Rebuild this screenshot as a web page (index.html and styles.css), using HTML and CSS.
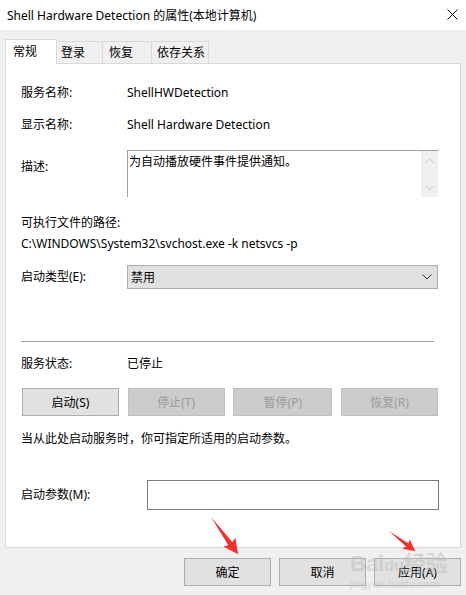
FILE: index.html
```html
<!DOCTYPE html>
<html lang="zh-CN">
<head>
    <meta charset="UTF-8">
    <title>Shell Hardware Detection 的属性(本地计算机)</title>
    <link rel="stylesheet" href="styles.css">
</head>
<body>
    <div class="window">
        <div class="titlebar">
            <span class="title">Shell Hardware Detection 的属性(本地计算机)</span>
            <svg class="close" width="11" height="11" viewBox="0 0 11 11">
                <path d="M0.5 0.5 L10.5 10.5 M10.5 0.5 L0.5 10.5" stroke="#000" stroke-width="1"/>
            </svg>
        </div>
        <div class="dialog">
            <div class="tabs">
                <div class="tab selected">常规</div>
                <div class="tab t2">登录</div>
                <div class="tab t3">恢复</div>
                <div class="tab t4">依存关系</div>
            </div>
            <div class="panel">
                <div class="row r-name">
                    <span class="label">服务名称:</span>
                    <span class="value">ShellHWDetection</span>
                </div>
                <div class="row r-display">
                    <span class="label">显示名称:</span>
                    <span class="value">Shell Hardware Detection</span>
                </div>
                <div class="row r-desc">
                    <span class="label desc-label">描述:</span>
                    <div class="desc-box">
                        <div class="desc-text">为自动播放硬件事件提供通知。</div>
                        <div class="scrollbar">
                            <svg width="9" height="6" viewBox="0 0 9 6"><path d="M0.5 5 L4.5 1 L8.5 5" fill="none" stroke="#c2c2c2" stroke-width="1"/></svg>
                            <svg width="9" height="6" viewBox="0 0 9 6"><path d="M0.5 1 L4.5 5 L8.5 1" fill="none" stroke="#c2c2c2" stroke-width="1"/></svg>
                        </div>
                    </div>
                </div>
                <div class="path-label">可执行文件的路径:</div>
                <div class="path">C:\WINDOWS\System32\svchost.exe -k netsvcs -p</div>
                <div class="row r-type">
                    <span class="label">启动类型(E):</span>
                    <div class="select">
                        <span>禁用</span>
                        <svg width="10" height="6" viewBox="0 0 10 6"><path d="M0.5 0.5 L5 5 L9.5 0.5" fill="none" stroke="#333" stroke-width="1"/></svg>
                    </div>
                </div>
                <div class="separator"></div>
                <div class="row r-status">
                    <span class="label">服务状态:</span>
                    <span class="value">已停止</span>
                </div>
                <div class="svc-buttons">
                    <button class="btn">启动(S)</button>
                    <button class="btn" disabled>停止(T)</button>
                    <button class="btn pause" disabled>暂停(P)</button>
                    <button class="btn" disabled>恢复(R)</button>
                </div>
                <div class="hint">当从此处启动服务时，你可指定所适用的启动参数。</div>
                <div class="row r-param">
                    <span class="label param-label">启动参数(M):</span>
                    <div class="param-input"></div>
                </div>
            </div>
            <div class="footer">
                <button class="btn footer-btn">确定</button>
                <button class="btn footer-btn">取消</button>
                <button class="btn footer-btn">应用(A)</button>
            </div>
        </div>

        <div class="watermark">
            <div class="wm-big">Bai<span class="wm-du">du</span>经验</div>
            <div class="wm-small">jingyan.baidu.com</div>
        </div>

        <!-- 红色箭头标注 -->
        <svg class="arrows" width="466" height="595" viewBox="0 0 466 595">
            <g transform="translate(211 517) rotate(53.9)">
                <polygon points="0,0 33,-2.6 31,-7.5 46,0 31,7.5 33,2.6" fill="#f0312c"/>
            </g>
            <g transform="translate(389 531) rotate(37.6)">
                <polygon points="0,0 23,-2 21.5,-6 33,0 21.5,6 23,2" fill="#f0312c"/>
            </g>
        </svg>
    </div>
</body>
</html>
```

FILE: styles.css
```css
body {
    margin: 0;
    font-family: "Noto Sans", "Noto Sans CJK SC", sans-serif;
    font-size: 12px;
    color: #000;
    background: #f0f0f0;
}
.window {
    position: relative;
    width: 466px;
    height: 595px;
    overflow: hidden;
    background: #f0f0f0;
}
.titlebar {
    height: 30px;
    background: #fff;
    display: flex;
    align-items: center;
    justify-content: space-between;
    padding: 0 8px 0 7px;
}
.title {
    font-size: 12px;
    line-height: 16px;
    margin-top: 1px;
}
.close {
    margin-top: -1px;
}
.dialog {
    padding: 9px 5px 0 5px;
}
.tabs {
    display: flex;
    align-items: flex-end;
    height: 24px;
}
.tab {
    box-sizing: border-box;
    height: 22px;
    line-height: 21px;
    border-top: 1px solid #d9d9d9;
    border-right: 1px solid #d9d9d9;
    background: #f0f0f0;
}
.tab.selected {
    position: relative;
    z-index: 1;
    height: 25px;
    width: 52px;
    margin-bottom: -1px;
    padding-left: 7px;
    line-height: 23px;
    background: #fff;
    border-left: 1px solid #d9d9d9;
}
.t2 { width: 46px; padding-left: 4px; }
.t3 { width: 49px; padding-left: 6px; }
.t4 { width: 57px; padding-left: 5px; }
.panel {
    box-sizing: border-box;
    width: 456px;
    height: 485px;
    background: #fff;
    border: 1px solid #d9d9d9;
    padding: 21px 22px 0 15px;
}
.row {
    display: flex;
    align-items: center;
}
.label {
    width: 106px;
    flex-shrink: 0;
    line-height: 16px;
}
.value {
    line-height: 16px;
}
.r-display { margin-top: 16px; }
.r-desc {
    margin-top: 17px;
    align-items: flex-start;
}
.desc-label { padding-top: 9px; }
.desc-box {
    flex: 1;
    height: 46px;
    display: flex;
    border-top: 1px solid #a0a0a0;
    border-left: 1px solid #a0a0a0;
}
.desc-text {
    flex: 1;
    padding: 3px 0 0 1px;
    line-height: 16px;
}
.scrollbar {
    width: 17px;
    background: #f0f0f0;
    display: flex;
    flex-direction: column;
    align-items: center;
    justify-content: space-between;
    padding: 7px 0 6px 0;
}
.path-label {
    margin-top: 18px;
    line-height: 16px;
}
.path {
    margin-top: 5px;
    line-height: 16px;
}
.r-type { margin-top: 13px; }
.select {
    flex: 1;
    box-sizing: border-box;
    height: 24px;
    background: #e1e1e1;
    border: 1px solid #adadad;
    display: flex;
    align-items: center;
    justify-content: space-between;
    padding: 0 5px 0 3px;
}
.separator {
    margin-top: 52px;
    height: 1px;
    background: #a0a0a0;
    margin-right: 4px;
}
.r-status { margin-top: 14px; }
.svc-buttons {
    margin-top: 16px;
    display: flex;
    justify-content: space-between;
    padding-left: 1px;
}
.btn {
    font-family: inherit;
    font-size: 12px;
    color: #000;
    box-sizing: border-box;
    width: 97px;
    height: 28px;
    background: #e1e1e1;
    border: 1px solid #adadad;
    padding: 0;
    margin: 0;
}
.btn.pause { width: 99px; }
.btn:disabled {
    background: #cccccc;
    border-color: #bfbfbf;
    color: #9b9b9b;
}
.hint {
    margin-top: 15px;
    line-height: 16px;
}
.r-param { margin-top: 33px; }
.param-label { width: 126px; }
.param-input {
    flex: 1;
    box-sizing: border-box;
    height: 30px;
    border: 1px solid #7a7a7a;
    margin-right: -1px;
}
.footer {
    display: flex;
    justify-content: flex-end;
    gap: 8px;
    margin-top: 10px;
}
.footer-btn {
    width: 87px;
    height: 28px;
}
.watermark {
    position: absolute;
    left: 350px;
    top: 552px;
    color: rgba(190, 190, 190, 0.5);
    font-family: "Liberation Sans", "Noto Sans CJK SC", sans-serif;
    pointer-events: none;
}
.wm-big {
    font-size: 22px;
    font-weight: bold;
    line-height: 24px;
}
.wm-du {
    font-size: 16px;
}
.wm-small {
    font-size: 11px;
    line-height: 13px;
}
.arrows {
    position: absolute;
    left: 0;
    top: 0;
    pointer-events: none;
}
```
